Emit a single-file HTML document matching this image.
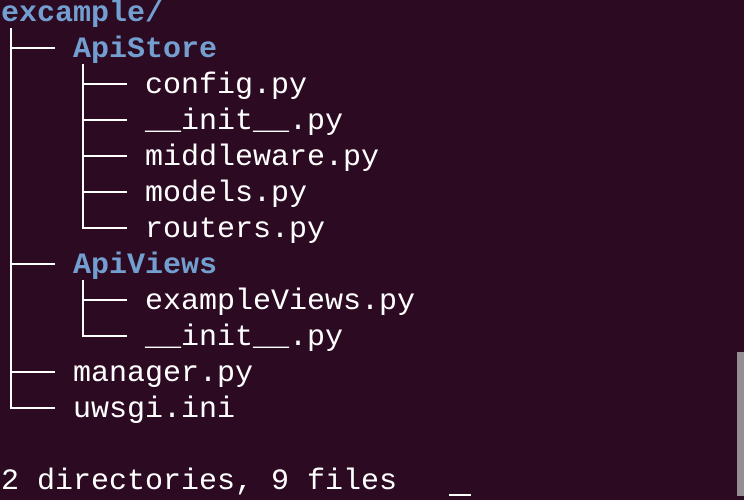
<!DOCTYPE html>
<html><head><style>
body{margin:0;width:744px;height:496px;background:#2c0a22;overflow:hidden;position:relative;font-family:"Liberation Mono",monospace;font-size:30px;color:#fff}
.t{position:absolute;line-height:36px;white-space:pre;letter-spacing:0}
.d{color:#729fcf;font-weight:bold}
.v{position:absolute;width:2px;background:#fff}
.h{position:absolute;height:2px;background:#fff}
</style></head><body>
<div class="t d" style="left:1px;top:-4px">excample/</div>
<div class="v" style="left:10px;top:28px;height:381px"></div>
<div class="h" style="left:10px;top:47px;width:45px"></div>
<div class="h" style="left:10px;top:263px;width:45px"></div>
<div class="h" style="left:10px;top:371px;width:45px"></div>
<div class="h" style="left:10px;top:407px;width:45px"></div>
<div class="v" style="left:82px;top:64px;height:165px"></div>
<div class="h" style="left:82px;top:83px;width:45px"></div>
<div class="h" style="left:82px;top:119px;width:45px"></div>
<div class="h" style="left:82px;top:155px;width:45px"></div>
<div class="h" style="left:82px;top:191px;width:45px"></div>
<div class="h" style="left:82px;top:227px;width:45px"></div>
<div class="v" style="left:82px;top:280px;height:57px"></div>
<div class="h" style="left:82px;top:299px;width:45px"></div>
<div class="h" style="left:82px;top:335px;width:45px"></div>
<div class="t d" style="left:73px;top:32px">ApiStore</div>
<div class="t" style="left:145px;top:68px">config.py</div>
<div class="t" style="left:145px;top:104px">__init__.py</div>
<div class="t" style="left:145px;top:140px">middleware.py</div>
<div class="t" style="left:145px;top:176px">models.py</div>
<div class="t" style="left:145px;top:212px">routers.py</div>
<div class="t d" style="left:73px;top:248px">ApiViews</div>
<div class="t" style="left:145px;top:284px">exampleViews.py</div>
<div class="t" style="left:145px;top:320px">__init__.py</div>
<div class="t" style="left:73px;top:356px">manager.py</div>
<div class="t" style="left:73px;top:392px">uwsgi.ini</div>
<div class="t" style="left:1px;top:464px">2 directories, 9 files</div>
<div style="position:absolute;left:737px;top:352px;width:7px;height:144px;background:#948d93"></div>
<div style="position:absolute;left:449px;top:494px;width:22px;height:2px;background:#fff"></div>
</body></html>
